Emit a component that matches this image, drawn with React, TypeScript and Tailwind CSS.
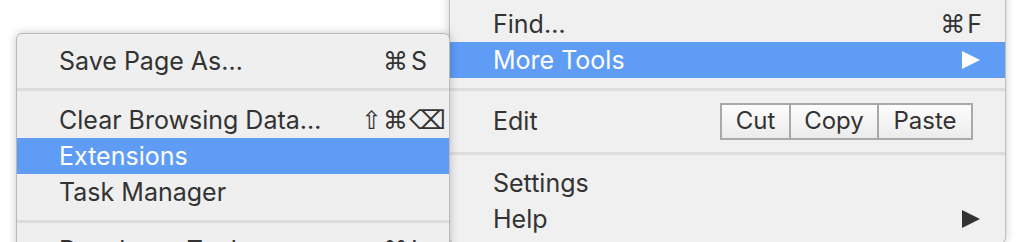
import React from 'react';

const Triangle = ({ color }: { color: string }) => (
    <svg width="18" height="18" viewBox="0 0 18 18">
        <polygon points="0,0 18,9 0,18" fill={color} />
    </svg>
);

const Separator = ({ top, bottom }: { top: string; bottom: string }) => (
    <div className={`${top} ${bottom}`}>
        <div className="h-[3px] bg-[#dcdcdc]" />
    </div>
);

interface SubItemProps {
    label: string;
    mods?: string;
    keyChar?: string;
    keyWide?: boolean;
    active?: boolean;
}

const SubItem: React.FC<SubItemProps> = ({ label, mods, keyChar, keyWide, active }) => (
    <div
        className={`flex h-[36px] items-center pl-[42px] pr-[6px] ${
            active ? 'bg-[#5f9cf5] text-white' : 'text-[#333]'
        }`}
    >
        <span className="flex-1">{label}</span>
        {keyChar && (
            <div className="flex items-center">
                <span className="text-right font-['DejaVu_Sans',sans-serif] text-[25px] tracking-[1px]">{mods}</span>
                <span
                    className={`w-[34px] text-left ${
                        keyWide ? "font-['DejaVu_Sans',sans-serif] text-[26px]" : 'pl-[2px]'
                    }`}
                >
                    {keyChar}
                </span>
            </div>
        )}
    </div>
);

const EditButton = ({ label, width, last }: { label: string; width: string; last?: boolean }) => (
    <div
        className={`flex h-full items-center justify-center bg-gradient-to-b from-[#fdfdfd] to-[#ececec] ${width} ${
            last ? '' : 'border-r-2 border-[#a9a9a9]'
        }`}
    >
        {label}
    </div>
);

export default function App() {
    return (
        <div className="flex h-[242px] w-[1016px] overflow-hidden bg-white font-['Inter','Liberation_Sans','DejaVu_Sans',sans-serif] text-[25px] leading-none">
            {/* submenu */}
            <div className="relative z-10 ml-[16px] mt-[33px] w-[434px] self-start rounded-[6px] border border-[#b9b9b9] bg-[#efefef] pt-[9px] shadow-[0_0_10px_rgba(0,0,0,0.22)]">
                <SubItem label="Save Page As…" mods="⌘" keyChar="S" />
                <Separator top="pt-[9px]" bottom="pb-[11px]" />
                <SubItem label="Clear Browsing Data…" mods="⇧⌘" keyChar="⌫" keyWide />
                <SubItem label="Extensions" active />
                <SubItem label="Task Manager" />
                <Separator top="pt-[10px]" bottom="pb-[9px]" />
                <SubItem label="Developer Tools" mods="⌥⌘" keyChar="I" />
            </div>

            {/* main menu */}
            <div className="-ml-[1px] -mt-[10px] w-[557px] self-start rounded-b-[6px] border border-[#bdbdbd] bg-[#f0f0f0] pb-[6px] pt-[15px] text-[#333] shadow-[0_0_10px_rgba(0,0,0,0.2)]">
                <div className="flex h-[36px] items-center pl-[43px] pr-[23px]">
                    <span className="flex-1">Find…</span>
                    <span className="font-['DejaVu_Sans',sans-serif] text-[25px]">⌘</span>
                    <span className="pl-[2px]">F</span>
                </div>
                <div className="flex h-[36px] items-center bg-[#5f9cf5] pl-[43px] pr-[25px] text-white">
                    <span className="flex-1">More Tools</span>
                    <Triangle color="#ffffff" />
                </div>
                <Separator top="pt-[10px]" bottom="pb-[10px]" />
                <div className="flex h-[40px] items-center pl-[43px] pr-[32px]">
                    <span className="flex-1">Edit</span>
                    <div className="flex h-[37px] border-2 border-[#a9a9a9] text-[24px]">
                        <EditButton label="Cut" width="w-[69px]" />
                        <EditButton label="Copy" width="w-[88px]" />
                        <EditButton label="Paste" width="w-[92px]" last />
                    </div>
                </div>
                <Separator top="pt-[11px]" bottom="pb-[10px]" />
                <div className="flex h-[36px] items-center pl-[43px]">Settings</div>
                <div className="flex h-[36px] items-center pl-[43px] pr-[25px]">
                    <span className="flex-1">Help</span>
                    <Triangle color="#333333" />
                </div>
            </div>
        </div>
    );
}
